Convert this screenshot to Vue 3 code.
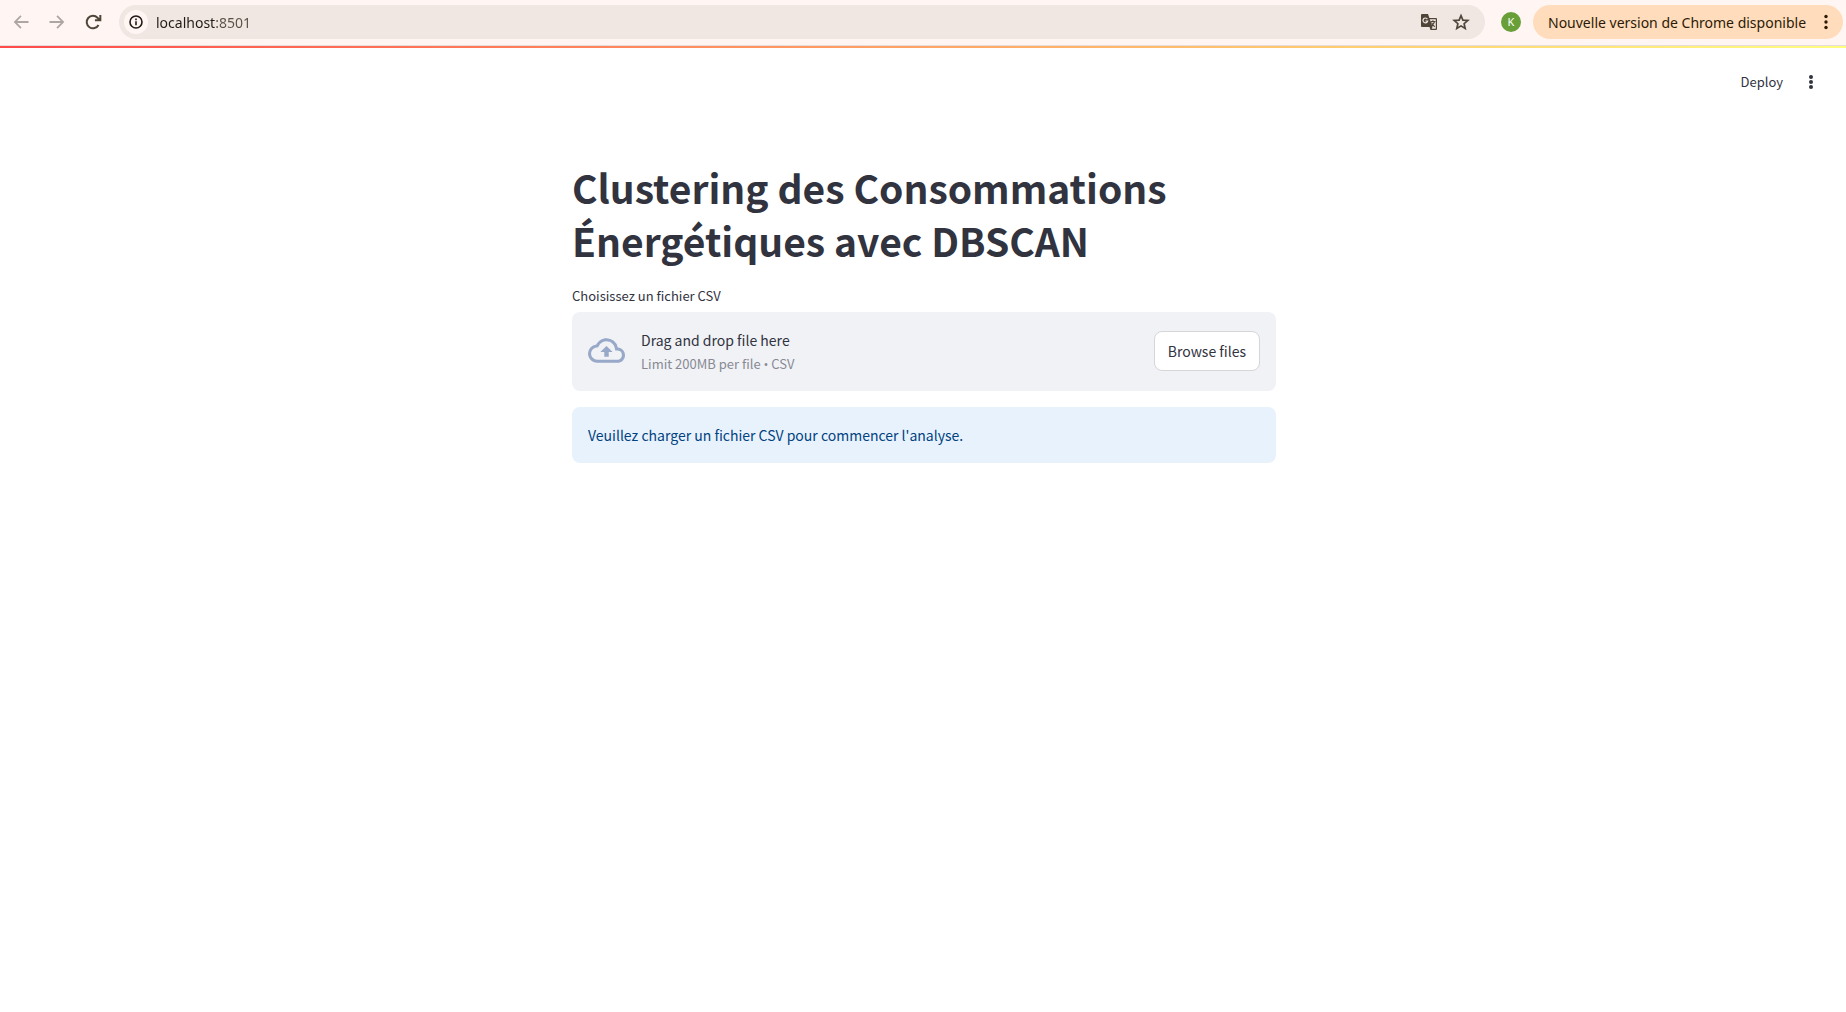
<script setup>
import { ref } from 'vue'

const url = ref('localhost:8501')
const picker = ref(null)
const browse = () => picker.value?.click()
</script>

<template>
  <div class="window">
    <header class="chrome">
      <nav class="nav">
        <button class="icon muted" aria-label="Précédent">
          <svg width="20" height="20" viewBox="0 0 24 24"><path fill="currentColor" d="M21 10.900H7.400l5.300-5.400L11.200 4l-8 8 8 8 1.500-1.500-5.300-5.400H21z" /></svg>
        </button>
        <button class="icon muted" aria-label="Suivant">
          <svg width="20" height="20" viewBox="0 0 24 24"><path fill="currentColor" d="M3 10.900h13.600l-5.300-5.400L12.800 4l8 8-8 8-1.500-1.500 5.300-5.400H3z" /></svg>
        </button>
        <button class="icon" aria-label="Actualiser">
          <svg width="20" height="20" viewBox="0 0 24 24"><path fill="none" stroke="currentColor" stroke-width="2.4" d="M18.6 15.500a7.500 7.500 0 1 1-1.200-8.600L20 9.500M20.800 3.500V10h-6.500" /></svg>
        </button>
      </nav>
      <div class="omnibox">
        <button class="info" aria-label="Informations sur le site">
          <svg width="16" height="16" viewBox="0 0 16 16"><circle cx="8" cy="8" r="6" fill="none" stroke="currentColor" stroke-width="1.6" /><path fill="currentColor" d="M7.2 7.3h1.6v3.9H7.2zM7.2 4.6h1.6v1.6H7.2z" /></svg>
        </button>
        <input v-model="url" class="url" type="text" aria-label="Adresse" />
        <button class="icon" aria-label="Traduire cette page">
          <svg width="18" height="18" viewBox="0 0 18 18">
            <path fill="currentColor" d="M2 1h6l1.400 4H16a1 1 0 0 1 1 1v10a1 1 0 0 1-1 1h-5.500L9.500 14H2a1 1 0 0 1-1-1V2a1 1 0 0 1 1-1z" />
            <path fill="#f0e7e2" d="M9.800 6.200H15.800V15.800H11.600L12.600 14z" />
            <path fill="none" stroke="#f0e7e2" stroke-width="1.200" d="M7.400 6.100A2.400 2.400 0 1 0 7.700 8H5.400" />
            <path fill="none" stroke="currentColor" stroke-width="1.100" d="M10.500 8.500h5M12.900 7.200v1.300M14.500 8.500c-.5 2-1.700 3.500-3 4.500M11.500 9.500c.5 1.600 1.700 3 3.200 4.200" />
          </svg>
        </button>
        <button class="icon" aria-label="Ajouter aux favoris">
          <svg width="18" height="18" viewBox="0 0 18 18"><path fill="none" stroke="currentColor" stroke-width="1.700" d="M9 2.600l1.900 4.500 4.900.4-3.700 3.200 1.100 4.800L9 12.900l-4.200 2.600 1.100-4.800-3.700-3.200 4.900-.4z" /></svg>
        </button>
      </div>
      <button class="avatar" aria-label="Profil">K</button>
      <button class="update">
        <span>Nouvelle version de Chrome disponible</span>
        <svg width="4" height="16" viewBox="0 0 4 16" fill="currentColor"><circle cx="2" cy="2.500" r="1.700" /><circle cx="2" cy="8" r="1.700" /><circle cx="2" cy="13.500" r="1.700" /></svg>
      </button>
    </header>

    <div class="decoration"></div>
    <div class="toolbar">
      <button class="deploy">Deploy</button>
      <button class="menu" aria-label="Menu principal">
        <svg width="4" height="14" viewBox="0 0 4 14" fill="currentColor"><circle cx="2" cy="2" r="2" /><circle cx="2" cy="7" r="2" /><circle cx="2" cy="12" r="2" /></svg>
      </button>
    </div>

    <main class="page">
      <h1>Clustering des Consommations Énergétiques avec DBSCAN</h1>
      <label class="label" for="csv">Choisissez un fichier CSV</label>
      <section class="dropzone">
        <input id="csv" ref="picker" class="hidden" type="file" accept=".csv" />
        <svg class="cloud" width="37" height="37" viewBox="0 0 24 24"><path fill="currentColor" d="M19.350 10.040A7.490 7.490 0 0 0 12 4C9.110 4 6.600 5.640 5.350 8.040A5.994 5.994 0 0 0 0 14c0 3.310 2.690 6 6 6h13c2.760 0 5-2.240 5-5 0-2.640-2.050-4.780-4.650-4.960zM19 18H6c-2.210 0-4-1.790-4-4 0-2.050 1.530-3.760 3.560-3.970l1.070-.11.5-.95A5.469 5.469 0 0 1 12 6c2.620 0 4.880 1.860 5.390 4.430l.3 1.500 1.530.11A2.980 2.980 0 0 1 22 15c0 1.650-1.350 3-3 3zM8 13h2.550v3h2.900v-3H16l-4-4z" /></svg>
        <div class="hint">
          <span>Drag and drop file here</span>
          <small>Limit 200MB per file <span class="bullet">•</span> CSV</small>
        </div>
        <button class="browse" @click="browse">Browse files</button>
      </section>
      <div class="alert" role="alert">Veuillez charger un fichier CSV pour commencer l'analyse.</div>
    </main>
  </div>
</template>

<style>
body {
  margin: 0;
  background: #fff;
}
</style>

<style scoped>
.window {
  color: #31333f;
  font-family: "Noto Sans CJK SC", sans-serif;
}
button,
input {
  margin: 0;
  padding: 0;
  border: 0;
  background: none;
  color: inherit;
  font: inherit;
}
svg {
  display: block;
  flex: none;
}
.chrome {
  display: flex;
  align-items: center;
  box-sizing: border-box;
  height: 46px;
  padding: 0 3px 1px 11px;
  border-bottom: 1px solid #e6dcda;
  background: #fff6f3;
  color: #4f4539;
  font-family: "Noto Sans", sans-serif;
  font-size: 14px;
}
.nav {
  display: flex;
  gap: 16px;
  margin-right: 16px;
}
.muted {
  color: #aea6a3;
}
.omnibox {
  display: flex;
  flex: 1;
  align-items: center;
  gap: 14px;
  box-sizing: border-box;
  height: 34px;
  padding: 0 15px 0 5px;
  border-radius: 17px;
  background: #f0e7e2;
}
.info {
  display: grid;
  place-items: center;
  width: 24px;
  height: 24px;
  margin-right: -6px;
  border-radius: 12px;
  background: #fff6f3;
  color: #211b14;
}
.url {
  flex: 1;
  min-width: 0;
  height: 24px;
  outline: none;
  background: linear-gradient(90deg, #211b14 60px, #5b5045 60px) text;
  color: transparent;
}
.avatar {
  width: 20px;
  height: 20px;
  margin: 0 12px 0 16px;
  border-radius: 10px;
  background: #689f38;
  color: #fff;
  font-size: 11px;
  line-height: 20px;
}
.update {
  display: flex;
  align-items: center;
  justify-content: space-between;
  box-sizing: border-box;
  min-width: 310px;
  height: 34px;
  padding: 0 15px;
  border-radius: 17px;
  background: #ffdcbb;
  color: #2c1a06;
}
.decoration {
  height: 2px;
  background: linear-gradient(90deg, #ff4b4b, #fffd80);
}
.toolbar {
  display: flex;
  align-items: center;
  justify-content: flex-end;
  gap: 26px;
  height: 67px;
  padding-right: 33px;
  font-size: 13px;
}
.page {
  box-sizing: border-box;
  max-width: 738px;
  margin: 0 auto;
  padding: 46px 16px 0 18px;
}
h1 {
  margin: 0;
  font-size: 39px;
  font-weight: 700;
  line-height: 53px;
}
.label {
  display: block;
  margin: 18px 0 5px;
  font-size: 13px;
  line-height: 22px;
}
.dropzone {
  display: flex;
  align-items: center;
  gap: 16px;
  box-sizing: border-box;
  min-height: 79px;
  padding: 14px 16px 16px;
  border-radius: 8px;
  background: #f0f2f6;
}
.hidden {
  display: none;
}
.cloud {
  color: #98a8c8;
}
.hint {
  display: flex;
  flex: 1;
  flex-direction: column;
  font-size: 14px;
  line-height: 26px;
}
small {
  color: #888993;
  font-size: 13px;
  line-height: 22px;
}
.bullet {
  font-family: "Open Sans", sans-serif;
}
.browse {
  height: 40px;
  padding: 0 13px;
  border: 1px solid #d6d6d9;
  border-radius: 8px;
  background: #fff;
  font-size: 14px;
}
.alert {
  margin-top: 16px;
  padding: 16px;
  border-radius: 8px;
  background: #e8f2fc;
  color: #004280;
  font-size: 14px;
  line-height: 24px;
}
</style>
